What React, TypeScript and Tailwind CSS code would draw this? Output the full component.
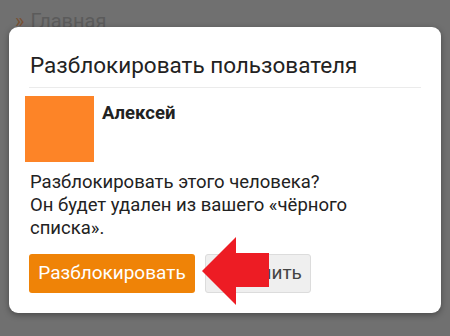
export default function App() {
  return (
    <div
      className="relative h-[336px] w-[450px] overflow-hidden bg-[#707070]"
      style={{ fontFamily: "Roboto, 'Liberation Sans', sans-serif" }}
    >
      {/* page under the overlay */}
      <div className="absolute left-[15px] top-[8px] flex items-center gap-[6px] text-[20px] leading-[26px] text-[#5b5b5b]">
        <span className="text-[#7a5033]">»</span>
        <span>Главная</span>
      </div>

      {/* dialog */}
      <div className="absolute left-[9px] top-[27px] w-[432px] rounded-[9px] bg-white px-[20px] pb-[20px] pt-[24px] shadow-[0_2px_6px_rgba(0,0,0,0.35)]">
        <h2 className="pl-px text-[22.5px] leading-[28px] text-[#222]">Разблокировать пользователя</h2>
        <div className="mt-[8px] h-px bg-[#ebebeb]" />

        <div className="mt-[8px] flex gap-[8px]">
          <div className="-ml-[4px] h-[66px] w-[69px] bg-[#fd8427]" />
          <div className="pt-[6px] text-[18.5px] font-bold leading-[22px] text-[#222]">Алексей</div>
        </div>

        <p className="mt-[9px] pl-px text-[18.5px] leading-[23px] text-[#222]">
          Разблокировать этого человека?
          <br />
          Он будет удален из вашего «чёрного
          <br />
          списка».
        </p>

        <div className="mt-[14px] flex gap-[10px]">
          <button className="h-[39px] w-[166px] rounded-[3px] bg-[#ef8307] text-[19px] text-white">
            Разблокировать
          </button>
          <button className="h-[39px] w-[106px] rounded-[3px] border border-[#dcdcdc] bg-[#efefef] text-[19px] text-[#444]">
            Отменить
          </button>
        </div>
      </div>

      {/* red pointer arrow */}
      <svg
        className="absolute left-[200px] top-[236px]"
        width="72"
        height="70"
        viewBox="0 0 72 70"
      >
        <polygon points="2,35 36,1 36,17 69,17 69,51 36,51 36,69" fill="#ed1c24" />
      </svg>
    </div>
  );
}
